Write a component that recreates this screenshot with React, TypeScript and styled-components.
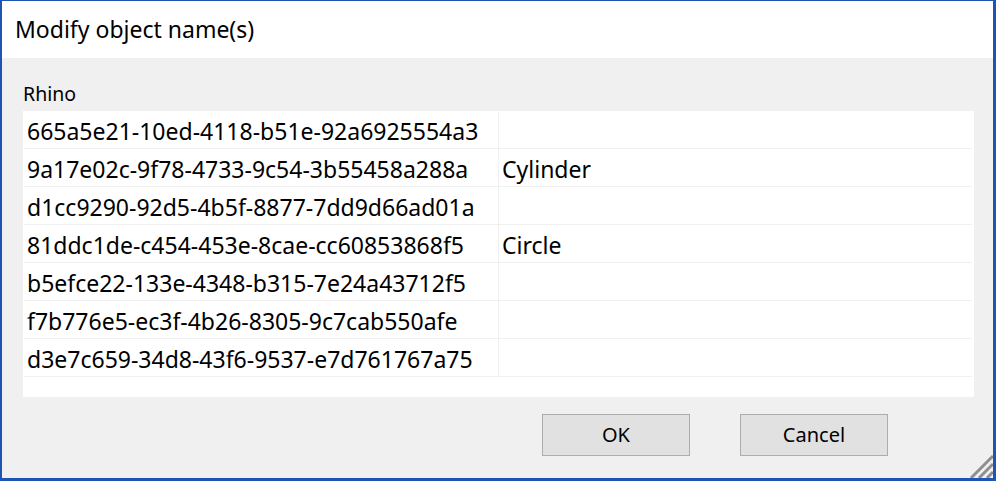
import React from "react";
import styled, { createGlobalStyle } from "styled-components";

const Global = createGlobalStyle`
  html, body { margin: 0; padding: 0; background: #f0f0f0; }
  body { width: 996px; height: 481px; overflow: hidden; }
  * { box-sizing: border-box; }
`;

const Win = styled.div`
  position: relative;
  width: 996px;
  height: 481px;
  border-style: solid;
  border-color: #1c56b0;
  border-width: 1px 3px 3px 2px;
  background: #f0f0f0;
  display: flex;
  flex-direction: column;
  font-family: "Noto Sans", "Open Sans", sans-serif;
  color: #000;
`;

const TitleBar = styled.div`
  height: 57px;
  background: #fff;
  display: flex;
  align-items: center;
  padding-left: 13px;
  padding-bottom: 1px;
  font-size: 23px;
`;

const Body = styled.div`
  flex: 1;
  display: flex;
  flex-direction: column;
  padding: 19px 20px 0 21px;
`;

const Label = styled.div`
  font-size: 19.5px;
  line-height: 34px;
  height: 34px;
`;

const Table = styled.div`
  width: 951px;
  height: 286px;
  background: #fff;
  display: flex;
  flex-direction: column;
  padding: 0 1px;
`;

const Row = styled.div`
  display: grid;
  grid-template-columns: 475px 1fr;
  height: 38px;
  border-bottom: 1px solid #f0f0f0;
  width: 948px;
`;

const Cell = styled.div<{ $first?: boolean }>`
  display: flex;
  align-items: center;
  padding: 2px 0 0 3px;
  font-size: 23px;
  white-space: nowrap;
  overflow: hidden;
  border-right: ${(p) => (p.$first ? "1px solid #f0f0f0" : "none")};
`;

const Footer = styled.div`
  display: flex;
  justify-content: flex-end;
  gap: 50px;
  padding: 17px 85px 0 0;
`;

const Button = styled.button`
  width: 148px;
  height: 42px;
  background: #e1e1e1;
  border: 1px solid #adadad;
  font-family: "Noto Sans", "Open Sans", sans-serif;
  font-size: 20px;
  color: #000;
  padding: 0 0 2px 0;
`;

const Grip = styled.svg`
  position: absolute;
  right: 0;
  bottom: 0;
`;

const rows: [string, string][] = [
  ["665a5e21-10ed-4118-b51e-92a6925554a3", ""],
  ["9a17e02c-9f78-4733-9c54-3b55458a288a", "Cylinder"],
  ["d1cc9290-92d5-4b5f-8877-7dd9d66ad01a", ""],
  ["81ddc1de-c454-453e-8cae-cc60853868f5", "Circle"],
  ["b5efce22-133e-4348-b315-7e24a43712f5", ""],
  ["f7b776e5-ec3f-4b26-8305-9c7cab550afe", ""],
  ["d3e7c659-34d8-43f6-9537-e7d761767a75", ""],
];

export default function App() {
  return (
    <>
      <Global />
      <Win>
        <TitleBar>Modify object name(s)</TitleBar>
        <Body>
          <Label>Rhino</Label>
          <Table>
            {rows.map(([id, name]) => (
              <Row key={id}>
                <Cell $first>{id}</Cell>
                <Cell>{name}</Cell>
              </Row>
            ))}
          </Table>
          <Footer>
            <Button>OK</Button>
            <Button>Cancel</Button>
          </Footer>
        </Body>
        <Grip width="26" height="26" viewBox="0 0 26 26">
          <g stroke="#8f8f8f" strokeWidth="3">
            <line x1="4" y1="26" x2="26" y2="4" />
            <line x1="12" y1="26" x2="26" y2="12" />
            <line x1="20" y1="26" x2="26" y2="20" />
          </g>
        </Grip>
      </Win>
    </>
  );
}
